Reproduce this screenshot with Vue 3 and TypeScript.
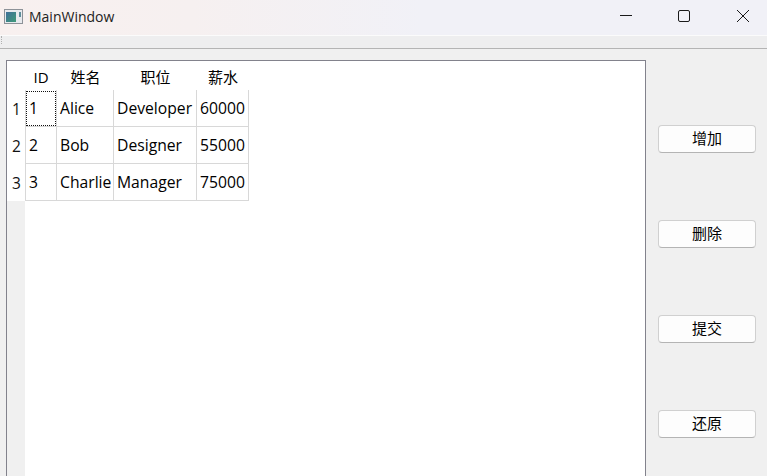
<script setup lang="ts">
const headers = [
  { label: 'ID', width: 32 },
  { label: '姓名', width: 57 },
  { label: '职位', width: 83 },
  { label: '薪水', width: 52 },
]
const rows = [
  { n: 1, cells: ['1', 'Alice', 'Developer', '60000'] },
  { n: 2, cells: ['2', 'Bob', 'Designer', '55000'] },
  { n: 3, cells: ['3', 'Charlie', 'Manager', '75000'] },
]
const actions = ['增加', '删除', '提交', '还原']
</script>

<template>
  <div class="window">
    <header class="titlebar">
      <div class="brand">
        <svg class="appicon" width="19" height="15" viewBox="0 0 19 15">
          <defs>
            <linearGradient id="g" x1="0" y1="0" x2="1" y2="1">
              <stop offset="0" stop-color="#3f6f9a" />
              <stop offset="1" stop-color="#3f9a78" />
            </linearGradient>
          </defs>
          <rect x="0.5" y="0.5" width="18" height="14" fill="#e8eaee" stroke="#8d9298" />
          <rect x="2" y="3" width="10" height="10" fill="url(#g)" />
          <rect x="15" y="3" width="2" height="5" fill="#5d8d9a" />
        </svg>
        <span class="title">MainWindow</span>
      </div>
      <div class="controls">
        <svg width="12" height="12" viewBox="0 0 12 12" class="ctl min"><path d="M0 5.5h12" stroke="#1a1a1a" fill="none" /></svg>
        <svg width="12" height="12" viewBox="0 0 12 12" class="ctl max"><rect x="0.5" y="0.5" width="11" height="11" rx="1.5" stroke="#1a1a1a" fill="none" /></svg>
        <svg width="12" height="12" viewBox="0 0 12 12" class="ctl cls"><path d="M0 0l12 12M12 0L0 12" stroke="#1a1a1a" fill="none" /></svg>
      </div>
    </header>
    <div class="toolbar"><span class="grip"></span></div>
    <main class="content">
      <section class="frame">
        <div class="head-row">
          <div class="corner"></div>
          <div v-for="h in headers" :key="h.label" class="hcell" :style="{ width: h.width + 'px' }">{{ h.label }}</div>
        </div>
        <div class="body">
          <div class="row-side">
            <div v-for="r in rows" :key="r.n" class="vcell">{{ r.n }}</div>
            <div class="side-fill"></div>
          </div>
          <div class="grid">
            <div v-for="(r, ri) in rows" :key="r.n" class="row">
              <div
                v-for="(c, ci) in r.cells"
                :key="ci"
                class="cell"
                :class="{ current: ri === 0 && ci === 0, first: ci === 0 }"
                :style="{ width: headers[ci].width + 'px' }"
              >{{ c }}</div>
            </div>
          </div>
        </div>
      </section>
      <aside class="actions">
        <button v-for="a in actions" :key="a" class="btn">{{ a }}</button>
      </aside>
    </main>
  </div>
</template>

<style>
html, body { margin: 0; padding: 0; overflow: hidden; }
</style>

<style scoped>
.window {
  width: 767px;
  height: 476px;
  overflow: hidden;
  background: #f0f0f0;
  font-family: "Open Sans", "Noto Sans CJK SC", sans-serif;
  display: flex;
  flex-direction: column;
}
.titlebar {
  height: 35px;
  flex: none;
  display: flex;
  align-items: center;
  justify-content: space-between;
  background: linear-gradient(90deg, #f8f0ef 0%, #f6f0f0 25%, #f1f1f7 55%, #f1f1f7 100%);
  border-bottom: 1px solid #fbfbfb;
}
.brand { display: flex; align-items: center; padding: 0 0 3px 4px; }
.appicon { margin-right: 6px; }
.title { font-size: 14px; color: #222; }
.controls { display: flex; align-items: center; padding: 0 18px 3px 0; }
.ctl { display: block; }
.min { margin-right: 46px; }
.max { margin-right: 47px; }
.toolbar {
  height: 13px;
  flex: none;
  box-sizing: border-box;
  background: #eeeeef;
  border-bottom: 1px solid #b4b4b4;
  position: relative;
}
.grip {
  display: block;
  width: 1px;
  height: 4px;
  margin-left: 1px;
  padding-top: 4px;
  border-left: 1px dotted #b0b0b0;
}
.content {
  flex: 1;
  min-height: 0;
  display: flex;
  padding: 11px 0 0 6px;
}
.frame {
  width: 640px;
  height: 440px;
  box-sizing: border-box;
  flex: none;
  border: 1px solid #82828c;
  background: #fff;
  display: flex;
  flex-direction: column;
}
.head-row { display: flex; height: 29px; flex: none; background: #fff; }
.corner { width: 18px; flex: none; }
.hcell {
  box-sizing: border-box;
  display: flex;
  align-items: center;
  justify-content: center;
  font-size: 15px;
  color: #000;
  padding-top: 2px;
}
.body { display: flex; flex: 1; min-height: 0; }
.row-side { width: 18px; flex: none; display: flex; flex-direction: column; }
.vcell {
  height: 37px;
  flex: none;
  background: #fff;
  display: flex;
  align-items: center;
  justify-content: center;
  font-size: 15.5px;
  color: #111;
  padding-left: 1px;
  box-sizing: border-box;
}
.side-fill { flex: 1; background: #f0f0f0; }
.grid { flex: 1; }
.row { display: flex; height: 37px; }
.cell {
  box-sizing: border-box;
  height: 37px;
  padding: 0 3px;
  display: flex;
  align-items: center;
  font-size: 15.7px;
  color: #000;
  white-space: nowrap;
  border-right: 1px solid #d8d8d8;
  border-bottom: 1px solid #d8d8d8;
}
.cell.first { border-left: 1px solid #d8d8d8; }
.cell.current { outline: 1px dotted #111; outline-offset: -2px; }
.actions {
  flex: 1;
  display: flex;
  flex-direction: column;
  align-items: flex-start;
  padding: 65px 0 0 12px;
  gap: 67px;
}
.btn {
  width: 98px;
  height: 28px;
  box-sizing: border-box;
  background: #fdfdfd;
  border: 1px solid #d0d0d0;
  border-bottom-color: #b4b4b4;
  border-radius: 4px;
  font-family: "Noto Sans CJK SC", sans-serif;
  font-size: 15px;
  line-height: 24px;
  color: #000;
  padding: 0 0 2px;
}
</style>
